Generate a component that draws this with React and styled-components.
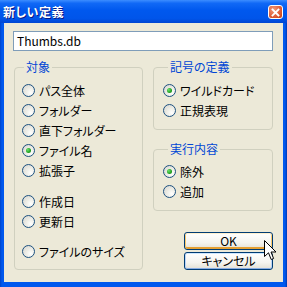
import styled, { createGlobalStyle, css } from "styled-components";

const GlobalStyle = createGlobalStyle`
  html, body {
    margin: 0;
    padding: 0;
    background: #ffffff;
  }
  body {
    font-family: "Noto Sans CJK JP", "Noto Sans", sans-serif;
  }
`

const Window = styled.div`
  position: relative;
  width: 287px;
  height: 287px;
  display: flex;
  flex-direction: column;
  background: linear-gradient(to right, #0043C9 0px, #0058EE 2px, #0058EE 285px, #0038B0 287px);
  font-family: "Noto Sans CJK JP", "Noto Sans", sans-serif;
  font-feature-settings: "palt";
  font-size: 12px;
  color: #000;
  overflow: hidden;
`

const TitleBar = styled.div`
  height: 23px;
  flex: none;
  display: flex;
  align-items: center;
  justify-content: space-between;
  padding: 0 4px 0 3px;
  box-sizing: border-box;
  background: linear-gradient(to bottom, #3C8DFF 0%, #1169F6 14%, #0058EE 45%, #0055EA 80%, #0046D2 100%);
`

const Title = styled.span`
  color: #fff;
  font-weight: 700;
  font-size: 12px;
  letter-spacing: 0.5px;
  text-shadow: 1px 1px 0 #0A1883;
  line-height: 23px;
`

const CloseButton = styled.div`
  width: 15px;
  height: 14px;
  margin-top: 1px;
  box-sizing: border-box;
  border: 1px solid #fff;
  border-radius: 3px;
  background: radial-gradient(circle at 35% 30%, #F19A7A 0%, #E0603A 55%, #C43C12 100%);
  display: flex;
  align-items: center;
  justify-content: center;
`

const Body = styled.div`
  flex: 1;
  margin: 0 4px 5px 4px;
  background: #ECE9D8;
  padding: 8px 10px 0 9px;
  box-sizing: border-box;
  display: flex;
  flex-direction: column;
`

const TextInput = styled.div`
  height: 20px;
  box-sizing: border-box;
  border: 1px solid #7F9DB9;
  background: #fff;
  padding: 0 3px;
  font-size: 12px;
  line-height: 18px;
  display: flex;
  align-items: center;
`

const Columns = styled.div`
  display: flex;
  gap: 10px;
  margin-top: 9px;
  padding-left: 1px;
`

const RightColumn = styled.div`
  width: 120px;
  display: flex;
  flex-direction: column;
`

const Group = styled.fieldset`
  margin: ${(p) => p.$top || 0}px 0 0 0;
  padding: ${(p) => p.$padTop}px 0 ${(p) => p.$padBottom}px ${(p) => p.$padLeft}px;
  border: 1px solid #D0D0BF;
  border-radius: 4px;
  min-width: 0;
  box-sizing: border-box;
  width: ${(p) => p.$width}px;
  display: flex;
  flex-direction: column;
`

const Legend = styled.legend`
  color: #0046D5;
  font-size: 12px;
  line-height: 14px;
  padding: 0 2px;
  margin-left: ${(p) => p.$inset}px;
`

const Row = styled.label`
  height: 20px;
  display: flex;
  align-items: center;
  gap: ${(p) => p.$gap || 4}px;
  white-space: nowrap;
  margin-top: ${(p) => p.$space || 0}px;
`

const RadioCircle = styled.span`
  width: 13px;
  height: 13px;
  flex: none;
  box-sizing: border-box;
  border-radius: 50%;
  border: 1px solid #1C5180;
  background: radial-gradient(circle at 70% 70%, #FFFFFF 0%, #F0F0EA 35%, #D4D3CC 100%);
  display: flex;
  align-items: center;
  justify-content: center;
  ${(p) =>
    p.$checked &&
    css`
      &::after {
        content: "";
        width: 5px;
        height: 5px;
        border-radius: 50%;
        background: radial-gradient(circle at 35% 35%, #6BE36B 0%, #21A121 60%, #1A7F1A 100%);
      }
    `}
`

const ButtonStack = styled.div`
  margin-top: 21px;
  display: flex;
  flex-direction: column;
  align-items: flex-end;
  gap: 2px;
`

const Button = styled.div`
  width: 89px;
  height: 18px;
  box-sizing: border-box;
  border: 1px solid #003C74;
  border-radius: 3px;
  background: linear-gradient(to bottom, #FFFFFF 0%, #F5F4EF 60%, #E3E0D5 100%);
  display: flex;
  align-items: center;
  justify-content: center;
  font-size: 12px;
  line-height: 16px;
  ${(p) =>
    p.$hot
      ? css`
          box-shadow: inset 0 1px 0 #FFF0CF, inset 1px 0 0 #F9C96B, inset -1px 0 0 #F9C96B, inset 0 -2px 0 #E5A033;
        `
      : css`
          box-shadow: inset 0 1px 0 #CEE7FF, inset 1px 0 0 #BCD4F6, inset -1px 0 0 #BCD4F6, inset 0 -1px 0 #89ADE4;
        `}
`

const Cursor = styled.svg`
  position: absolute;
  left: 264px;
  top: 240px;
`

const Radio = ({ label, checked, space, gap }) => (
  <Row $space={space} $gap={gap}>
    <RadioCircle $checked={checked} />
    <span>{label}</span>
  </Row>
)

const App = () => {
  return (
    <>
      <GlobalStyle />
      <Window>
        <TitleBar>
          <Title>新しい定義</Title>
          <CloseButton>
            <svg width="9" height="9" viewBox="0 0 9 9">
              <path d="M1.5 1.5 L7.5 7.5 M7.5 1.5 L1.5 7.5" stroke="#fff" strokeWidth="1.8" strokeLinecap="square" />
            </svg>
          </CloseButton>
        </TitleBar>
        <Body>
          <TextInput>Thumbs.db</TextInput>
          <Columns>
            <Group $width={129} $padTop={6} $padBottom={7} $padLeft={7}>
              <Legend $inset={2}>対象</Legend>
              <Radio label="パス全体" />
              <Radio label="フォルダー" />
              <Radio label="直下フォルダー" />
              <Radio label="ファイル名" checked />
              <Radio label="拡張子" />
              <Radio label="作成日" space={11} />
              <Radio label="更新日" />
              <Radio label="ファイルのサイズ" space={10} />
            </Group>
            <RightColumn>
              <Group $width={120} $padTop={6} $padBottom={9} $padLeft={9}>
                <Legend $inset={5}>記号の定義</Legend>
                <Radio label="ワイルドカード" checked />
                <Radio label="正規表現" />
              </Group>
              <Group $width={120} $top={12} $padTop={5} $padBottom={9} $padLeft={9}>
                <Legend $inset={5}>実行内容</Legend>
                <Radio label="除外" checked />
                <Radio label="追加" />
              </Group>
              <ButtonStack>
                <Button $hot>OK</Button>
                <Button>キャンセル</Button>
              </ButtonStack>
            </RightColumn>
          </Columns>
        </Body>
        <Cursor width="13" height="21" viewBox="0 0 13 21">
          <path d="M0.5 0.5 L0.5 16.5 L4.5 12.8 L7.2 19.5 L9.6 18.5 L7 12 L12 12 Z" fill="#fff" stroke="#000" strokeWidth="1" strokeLinejoin="miter" />
        </Cursor>
      </Window>
    </>
  )
}

export default App
